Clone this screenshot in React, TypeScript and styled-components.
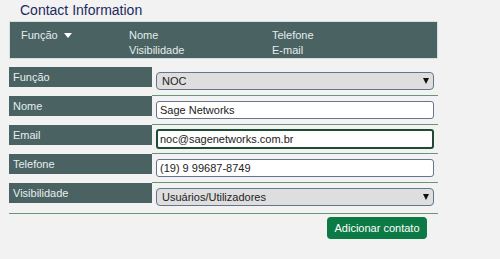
import * as React from 'react';
import styled, { createGlobalStyle } from 'styled-components';

const GlobalStyle = createGlobalStyle`
  body {
    margin: 0;
    background: #f2f2f2;
    font-family: 'Liberation Sans', Arial, sans-serif;
  }
`;

const Page = styled.div`
  width: 429px;
  padding-left: 9px;
`;

const Title = styled.h2`
  margin: 0;
  padding: 2px 0 0 11px;
  height: 19px;
  font-size: 14px;
  line-height: 17px;
  font-weight: 400;
  color: #1e2a5e;
`;

const HeaderBar = styled.div`
  display: grid;
  grid-template-columns: 108px 143px 1fr;
  box-sizing: border-box;
  height: 38px;
  padding: 6px 0 0 11px;
  background: #4a6362;
  border: 1px solid #d6dfdf;
  color: #e4ebee;
  font-size: 11px;
  line-height: 15px;
`;

const HeaderCol = styled.div`
  display: flex;
  flex-direction: column;
`;

const SortLabel = styled.span`
  display: flex;
  align-items: center;
  gap: 6px;
`;

const Rows = styled.div`
  margin-top: 8px;
  padding-bottom: 1px;
  border-bottom: 1px solid #6a9478;
`;

const Row = styled.div`
  display: grid;
  grid-template-columns: 143px 1fr;
`;

const Label = styled.div`
  box-sizing: border-box;
  height: 20px;
  padding: 3px 0 0 4px;
  background: #4a6362;
  color: #e6eef0;
  font-size: 11px;
  line-height: 14px;
`;

const FieldCell = styled.div<{ $last?: boolean }>`
  position: relative;
  box-sizing: border-box;
  height: 29px;
  padding: 5px 4px 0;
  border-bottom: ${(p) => (p.$last ? 'none' : '1px solid #6a9478')};
`;

const Select = styled.select`
  appearance: none;
  display: block;
  box-sizing: border-box;
  width: 100%;
  height: 18px;
  margin: 0;
  padding: 0 16px 0 5px;
  background: #dedede;
  border: 1px solid #66748c;
  border-radius: 4px;
  color: #222;
  font-family: inherit;
  font-size: 11px;
`;

const Caret = styled.span`
  position: absolute;
  right: 9px;
  top: 11px;
  width: 0;
  height: 0;
  border-left: 3px solid transparent;
  border-right: 3px solid transparent;
  border-top: 6px solid #111;
  pointer-events: none;
`;

const Input = styled.input<{ $focused?: boolean }>`
  display: block;
  box-sizing: border-box;
  width: 100%;
  height: ${(p) => (p.$focused ? '20px' : '18px')};
  margin: ${(p) => (p.$focused ? '-1px 0 0' : '0')};
  padding: 0 ${(p) => (p.$focused ? '2px' : '3px')};
  background: #fff;
  border: ${(p) => (p.$focused ? '2px solid #1f4a34' : '1px solid #66748c')};
  border-radius: 3px;
  color: #222;
  font-family: inherit;
  font-size: 11px;
  outline: none;
`;

const Actions = styled.div`
  display: flex;
  justify-content: flex-end;
  padding: 3px 11px 0 0;
`;

const Button = styled.button`
  height: 22px;
  width: 100px;
  padding: 0;
  background: #0c7a45;
  border: none;
  border-radius: 4px;
  color: #fff;
  font-family: inherit;
  font-size: 11px;
`;

const WhiteCaret = styled.span`
  width: 0;
  height: 0;
  border-left: 4px solid transparent;
  border-right: 4px solid transparent;
  border-top: 5px solid #fff;
`;

export default function App() {
  return (
    <Page>
      <GlobalStyle />
      <Title>Contact Information</Title>
      <HeaderBar>
        <HeaderCol>
          <SortLabel>
            Função <WhiteCaret />
          </SortLabel>
        </HeaderCol>
        <HeaderCol>
          <span>Nome</span>
          <span>Visibilidade</span>
        </HeaderCol>
        <HeaderCol>
          <span>Telefone</span>
          <span>E-mail</span>
        </HeaderCol>
      </HeaderBar>
      <Rows>
        <Row>
          <Label>Função</Label>
          <FieldCell>
            <Select defaultValue="NOC">
              <option>NOC</option>
            </Select>
            <Caret />
          </FieldCell>
        </Row>
        <Row>
          <Label>Nome</Label>
          <FieldCell>
            <Input defaultValue="Sage Networks" />
          </FieldCell>
        </Row>
        <Row>
          <Label>Email</Label>
          <FieldCell>
            <Input $focused defaultValue="noc@sagenetworks.com.br" />
          </FieldCell>
        </Row>
        <Row>
          <Label>Telefone</Label>
          <FieldCell>
            <Input defaultValue="(19) 9 99687-8749" />
          </FieldCell>
        </Row>
        <Row>
          <Label>Visibilidade</Label>
          <FieldCell $last>
            <Select defaultValue="Usuários/Utilizadores">
              <option>Usuários/Utilizadores</option>
            </Select>
            <Caret />
          </FieldCell>
        </Row>
      </Rows>
      <Actions>
        <Button>Adicionar contato</Button>
      </Actions>
    </Page>
  );
}
